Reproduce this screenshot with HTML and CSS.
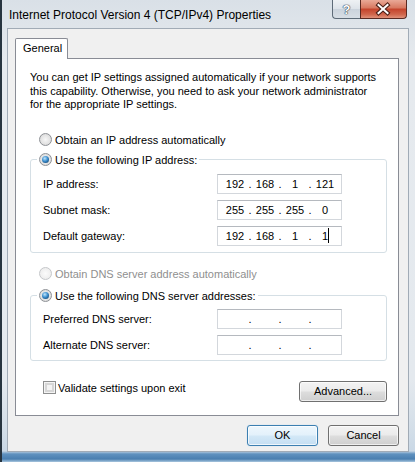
FILE: index.html
```html
<!DOCTYPE html>
<html>
<head>
<meta charset="utf-8">
<link rel="stylesheet" href="styles.css">
</head>
<body>
<div class="window">
  <div class="titlebar">
    <div class="title">Internet Protocol Version 4 (TCP/IPv4) Properties</div>
    <div class="caption-buttons">
      <div class="cbtn help">?</div>
      <div class="cbtn close">
        <svg width="47" height="19" viewBox="0 0 47 19">
          <path d="M18.5 5 L27.5 13 M27.5 5 L18.5 13" stroke="#4b1f17" stroke-width="4.2" stroke-linecap="square" fill="none"/>
          <path d="M18.5 5 L27.5 13 M27.5 5 L18.5 13" stroke="#ffffff" stroke-width="2" stroke-linecap="square" fill="none"/>
        </svg>
      </div>
    </div>
  </div>
  <div class="client">
    <div class="tabs"><div class="tab">General</div></div>
    <div class="panel">
      <p class="intro">You can get IP settings assigned automatically if your network supports<br>this capability. Otherwise, you need to ask your network administrator<br>for the appropriate IP settings.</p>
      <div class="radio-row opt1"><span class="radio"></span><span>Obtain an IP address automatically</span></div>
      <fieldset class="group g1">
        <legend><span class="radio checked"></span><span>Use the following IP address:</span></legend>
        <div class="field"><span class="label">IP address:</span>
          <div class="ipbox"><span class="seg">192</span><span class="dot">.</span><span class="seg">168</span><span class="dot">.</span><span class="seg">1</span><span class="dot">.</span><span class="seg">121</span></div>
        </div>
        <div class="field"><span class="label">Subnet mask:</span>
          <div class="ipbox"><span class="seg">255</span><span class="dot">.</span><span class="seg">255</span><span class="dot">.</span><span class="seg">255</span><span class="dot">.</span><span class="seg">0</span></div>
        </div>
        <div class="field"><span class="label">Default gateway:</span>
          <div class="ipbox"><span class="seg">192</span><span class="dot">.</span><span class="seg">168</span><span class="dot">.</span><span class="seg">1</span><span class="dot">.</span><span class="seg">1<span class="caret"></span></span></div>
        </div>
      </fieldset>
      <div class="radio-row opt2 disabled"><span class="radio"></span><span>Obtain DNS server address automatically</span></div>
      <fieldset class="group g2">
        <legend><span class="radio checked"></span><span>Use the following DNS server addresses:</span></legend>
        <div class="field"><span class="label">Preferred DNS server:</span>
          <div class="ipbox"><span class="seg"></span><span class="dot">.</span><span class="seg"></span><span class="dot">.</span><span class="seg"></span><span class="dot">.</span><span class="seg"></span></div>
        </div>
        <div class="field"><span class="label">Alternate DNS server:</span>
          <div class="ipbox"><span class="seg"></span><span class="dot">.</span><span class="seg"></span><span class="dot">.</span><span class="seg"></span><span class="dot">.</span><span class="seg"></span></div>
        </div>
      </fieldset>
      <div class="bottom-row">
        <div class="check"><span class="checkbox"></span><span>Validate settings upon exit</span></div>
        <button class="btn btn-adv">Advanced...</button>
      </div>
    </div>
    <div class="dialog-buttons">
      <button class="btn default">OK</button>
      <button class="btn">Cancel</button>
    </div>
  </div>
</div>
</body>
</html>
```
FILE: styles.css
```css
html, body {
  margin: 0;
  padding: 0;
}
body {
  width: 415px;
  height: 462px;
  overflow: hidden;
  font-family: "Liberation Sans", Arial, sans-serif;
  font-size: 11px;
  color: #000;
}
.window {
  box-sizing: border-box;
  width: 415px;
  height: 462px;
  border-left: 2px solid #27343f;
  padding: 0 6px 11px 5px;
  display: flex;
  flex-direction: column;
  background: linear-gradient(to bottom, #d9e0e7 0px, #e6eaee 60px, #e4e9ee 380px, #d3dee8 430px, #c9d8e6 451px, #5f91bf 454px, #4a7fb0 459px, #a9c6de 462px);
}
.titlebar {
  height: 28px;
  display: flex;
  align-items: flex-start;
  flex: none;
}
.title {
  padding-left: 2px;
  font-size: 12px;
  line-height: 30px;
  white-space: nowrap;
}
.caption-buttons {
  margin-left: auto;
  margin-right: 2px;
  display: flex;
}
.cbtn {
  box-sizing: border-box;
  height: 19px;
}
.help {
  width: 28px;
  border: 1px solid #5e6b78;
  border-top: none;
  border-right: none;
  border-radius: 0 0 0 4px;
  background: linear-gradient(to bottom, #eef1f4, #dde3e9 50%, #cbd3dc 51%, #d7dee5);
  color: #fff;
  font-weight: bold;
  font-size: 13px;
  line-height: 19px;
  text-align: center;
  text-shadow: 0 0 1px #2c3a48, 0 0 1px #2c3a48, 0 0 1px #2c3a48;
}
.close {
  width: 47px;
  border: 1px solid #5a2a22;
  border-top: none;
  border-radius: 0 0 4px 0;
  background: linear-gradient(to bottom, #e9a997, #d7775f 45%, #c4432b 50%, #d0664c 80%, #e0917a);
}
.close svg {
  display: block;
  margin-left: -1px;
}
.client {
  flex: 1;
  background: #f0f0f0;
  border: 1px solid #a1abb6;
  padding: 9px 9px 5px 7px;
  display: flex;
  flex-direction: column;
}
.tabs {
  display: flex;
  position: relative;
  z-index: 1;
}
.tab {
  box-sizing: border-box;
  width: 53px;
  height: 21px;
  margin-bottom: -1px;
  border: 1px solid #898c95;
  border-bottom: none;
  border-radius: 2px 2px 0 0;
  background: #fff;
  padding-left: 7px;
  line-height: 19px;
}
.panel {
  background: #fff;
  border: 1px solid #898c95;
  padding: 12px 11px 13px 14px;
}
.intro {
  margin: 0;
  line-height: 13.5px;
  white-space: nowrap;
}
.radio-row {
  display: flex;
  align-items: center;
  height: 20px;
  margin-left: 9px;
}
.opt1 {
  margin-top: 18px;
}
.opt2 {
  margin-top: 11px;
}
.disabled {
  color: #8f8f8f;
}
.radio {
  box-sizing: border-box;
  width: 13px;
  height: 13px;
  border: 1px solid #8e9196;
  border-radius: 50%;
  background: radial-gradient(circle at 50% 50%, #f7f7f7 0%, #e2e2e2 60%, #cfcfcf 100%);
  margin-right: 3px;
  position: relative;
  flex: none;
}
.disabled .radio {
  border-color: #c5c7ca;
  background: radial-gradient(circle at 50% 50%, #fbfbfb 0%, #eeeeee 70%, #e4e4e4 100%);
}
.radio.checked::after {
  content: "";
  position: absolute;
  left: 2px;
  top: 2px;
  width: 7px;
  height: 7px;
  border-radius: 50%;
  background: radial-gradient(circle at 40% 35%, #c2e6fb 0%, #3d8fcf 45%, #174f80 80%, #0f3a60 100%);
}
.group {
  margin: 0;
  min-width: 0;
  border: 1px solid #d5dfe5;
  border-radius: 3px;
  padding: 4px 11px 6px 12px;
}
.g2 {
  margin-top: 2px;
  padding-top: 3px;
  padding-bottom: 5px;
}
.group legend {
  display: flex;
  align-items: center;
  height: 20px;
  padding: 0 2px;
  margin-left: -6px;
}
.field {
  display: flex;
  align-items: center;
  height: 20px;
}
.field + .field {
  margin-top: 6px;
}
.label {
  width: 174px;
  flex: none;
}
.ipbox {
  box-sizing: border-box;
  width: 125px;
  height: 20px;
  border: 1px solid #d3d7dc;
  border-top-color: #b5b9bf;
  background: #fff;
  display: flex;
  align-items: center;
  padding-left: 5px;
}
.seg {
  width: 24px;
  text-align: center;
}
.dot {
  width: 6px;
  text-align: center;
}
.caret {
  display: inline-block;
  width: 0;
  height: 15px;
  border-left: 1px solid #000;
  margin-right: -1px;
  vertical-align: -3px;
}
.bottom-row {
  margin-top: 20px;
  display: flex;
  align-items: flex-start;
  height: 21px;
}
.check {
  display: flex;
  align-items: center;
  height: 14px;
  margin-left: 13px;
}
.checkbox {
  box-sizing: border-box;
  width: 13px;
  height: 13px;
  border: 1px solid #8e8f8f;
  background: #f4f4f4;
  box-shadow: inset 0 0 0 1px #f4f4f4, inset 0 0 0 3px #d6d6d6;
  margin-right: 2px;
  flex: none;
}
.btn {
  box-sizing: border-box;
  width: 71px;
  height: 21px;
  padding: 0;
  font: inherit;
  color: #000;
  border: 1px solid #707070;
  border-radius: 3px;
  background: linear-gradient(to bottom, #f3f3f3 0%, #ebebeb 48%, #dddddd 52%, #cfcfcf 100%);
  box-shadow: inset 0 0 0 1px rgba(255, 255, 255, 0.65);
}
.btn-adv {
  margin-left: auto;
  width: 88px;
}
.dialog-buttons {
  margin-top: 9px;
  display: flex;
  justify-content: flex-end;
  gap: 10px;
}
.btn.default {
  border-color: #3c7fb1;
  background: linear-gradient(to bottom, #eef7fd 0%, #e3f1fb 48%, #d3e8f7 52%, #c4def2 100%);
  box-shadow: inset 0 0 0 1px rgba(255, 255, 255, 0.7), 0 0 1px #9ccbee;
}
```
